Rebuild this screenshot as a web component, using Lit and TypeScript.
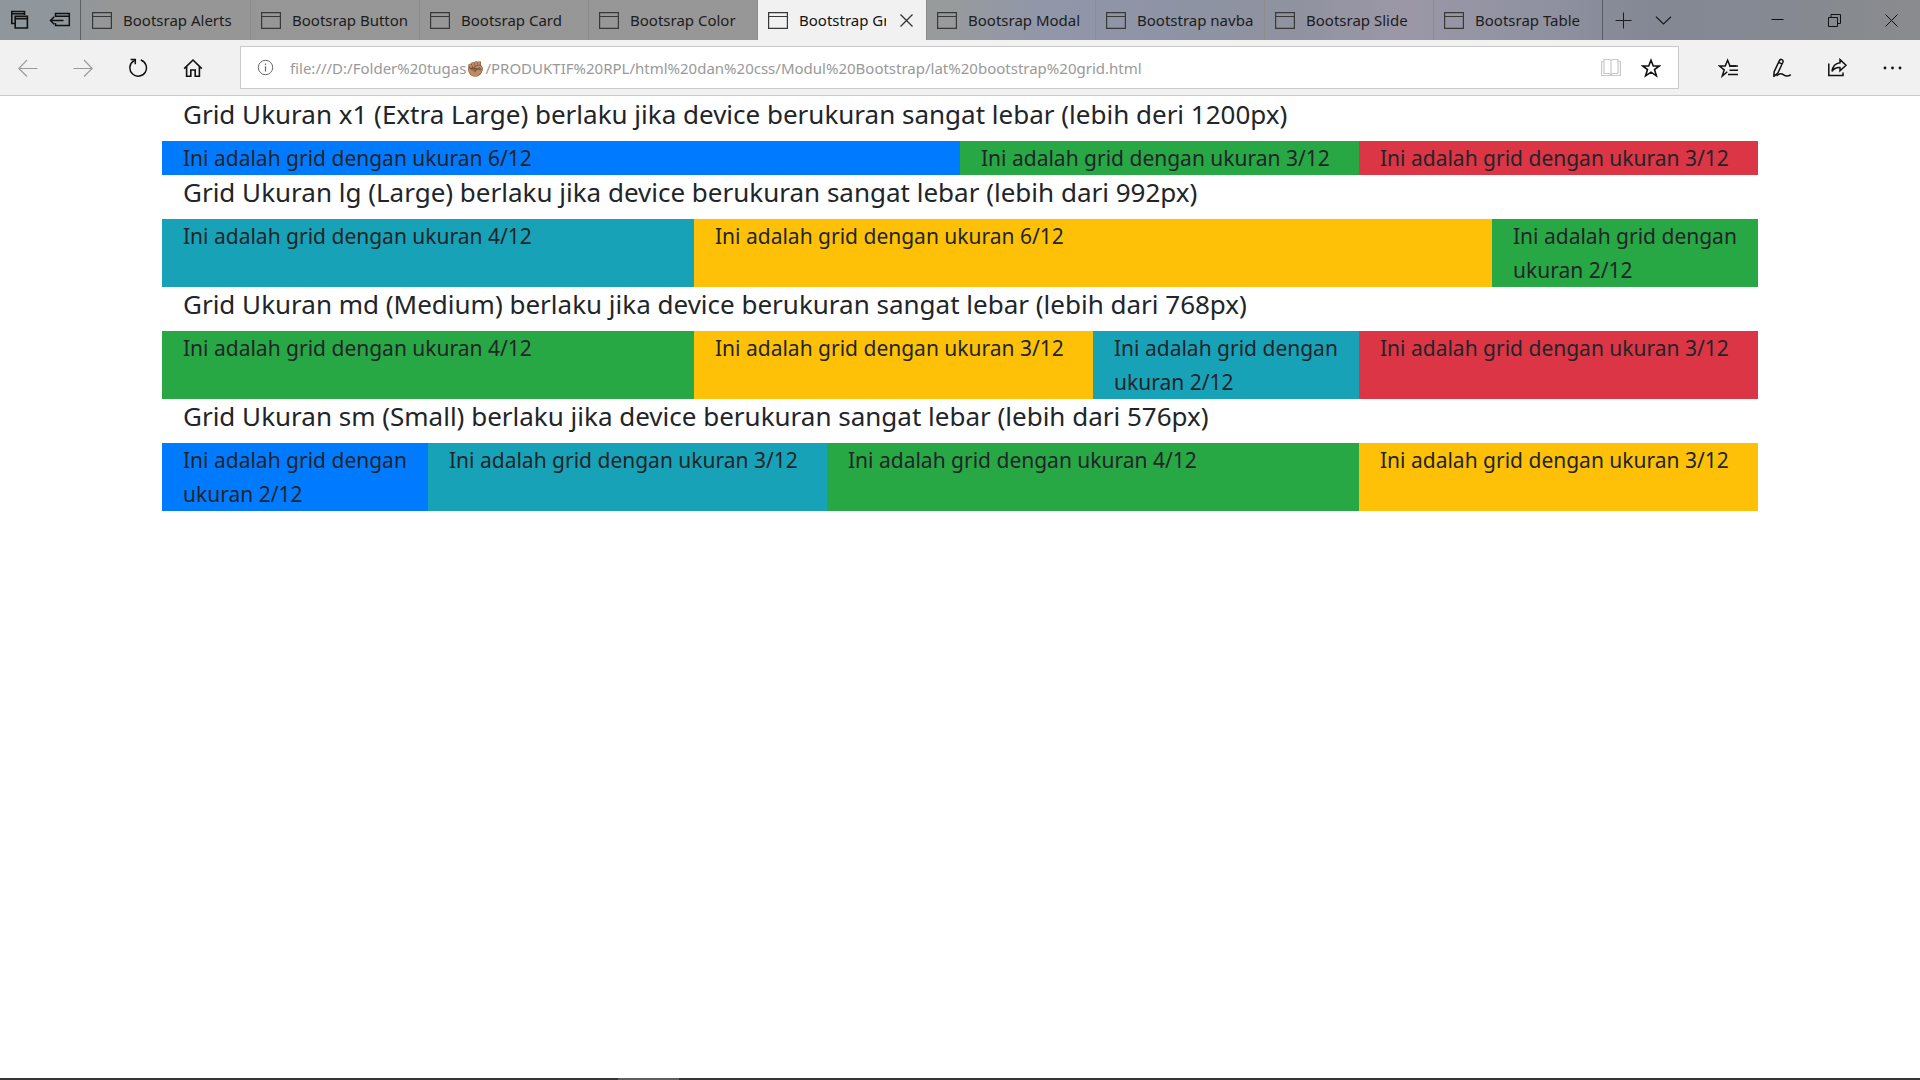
import { LitElement, html, css, svg, nothing } from "lit";
import { customElement, property } from "lit/decorators.js";
import { classMap } from "lit/directives/class-map.js";

const icon = (w: number, h: number, body: unknown) =>
  html`<svg width=${w} height=${h} viewBox="0 0 ${w} ${h}" fill="none" stroke="currentColor" aria-hidden="true">${body}</svg>`;

const icons = {
  stack: () =>
    icon(20, 20, svg`<path stroke-width="1.6" d="M5 13.5H1.8V1.5H14.5V5M1.8 3.8H14.5M5.2 6.2H17.4V18H5.2zM5.2 8.6H17.4"/>`),
  aside: () =>
    icon(22, 20, svg`<path stroke-width="1.5" d="M6.5 7V3.5H20.3V15.5H6.5V13M6.5 6.2H20.3M1.5 10.5H14.5M5.2 6.8L1.5 10.5L5.2 14.2"/>`),
  page: () => icon(20, 17, svg`<path stroke-width="1.2" d="M.6 .6H19.4V16.4H.6zM.6 4.5H19.4"/>`),
  tabClose: () => icon(13, 13, svg`<path stroke-width="1.3" d="M.5 .5L12.5 12.5M12.5 .5L.5 12.5"/>`),
  plus: () => icon(17, 17, svg`<path d="M.5 8.5H16.5M8.5 .5V16.5"/>`),
  chevron: () => icon(17, 9, svg`<path stroke-width="1.2" d="M1 .8L8.5 8L16 .8"/>`),
  minimize: () => icon(13, 13, svg`<path d="M.5 5.5H12.5"/>`),
  restore: () => icon(13, 13, svg`<path d="M.5 3.5H9.5V12.5H.5zM3 3.5V.5H12.5V9.5H9.5"/>`),
  close: () => icon(13, 13, svg`<path d="M.5 .5L12.5 12.5M12.5 .5L.5 12.5"/>`),
  back: () => icon(20, 18, svg`<path stroke-width="1.1" d="M19.5 9.5H1M9 1L.8 9.5L9 17.5"/>`),
  forward: () => icon(20, 18, svg`<path stroke-width="1.1" d="M.5 9.5H19M11 1L19.2 9.5L11 17.5"/>`),
  refresh: () =>
    icon(20, 20, svg`<path stroke-width="1.5" d="M12.8 2A8.3 8.3 0 1 1 5.2 3.2M2.6 1.6H7.3V6.2"/><path stroke-width="1.5" d="M7.2 1.8L4.6 4"/>`),
  home: () =>
    icon(20, 20, svg`<path stroke-width="1.6" d="M1.2 10.6L10 2L18.8 10.6M3.6 8.6V18.2H7.8V12H12.2V18.2H16.4V8.6"/>`),
  info: () =>
    icon(17, 17, svg`<circle cx="8.5" cy="8.5" r="7.2"/><path stroke-width="1.2" d="M8.5 7.2V12.4M8.5 4.6V6"/>`),
  book: () =>
    icon(20, 19, svg`<path stroke-width="1.2" d="M3 1.5H8.5L10 2.5L11.5 1.5H17V15.5H11.5L10 16.5L8.5 15.5H3zM10 2.5V18M3 3.5H.6V17.5H19.4V3.5H17"/>`),
  star: () =>
    icon(20, 20, svg`<path stroke-width="1.6" stroke-linejoin="miter" d="M10 2.2L12.3 8H18.2L13.5 11.6L15.4 17.8L10 14.1L4.6 17.8L6.5 11.6L1.8 8H7.7z"/>`),
  favorites: () =>
    icon(20, 20, svg`<path stroke-width="1.5" d="M18 8H12L9.6 2.2L7.2 8H1.4L6.2 11.8L4.3 18L9.3 13.7"/><path stroke-width="1.4" d="M11 8H20M11.5 12.3H20M10 16.5H20"/>`),
  notes: () =>
    icon(20, 20, svg`<path stroke-width="1.5" stroke-linejoin="round" d="M1.2 13.6L6.4 2.6Q7.2 .9 8.9 1.6Q10.6 2.5 9.9 4.2L4.8 15.2L.8 18.4zM5.6 4.4L9.2 6"/><path stroke-width="1.5" d="M3.5 17.8Q7.5 14.6 9.8 16.4T13.8 18Q16 18 17.8 16.6"/>`),
  share: () =>
    icon(20, 20, svg`<path stroke-width="1.5" d="M.8 5.5V17.5H15V14.5"/><path stroke-width="1.5" stroke-linejoin="miter" d="M12 1.6L18 7.2L12 12.8V9.6Q6.8 9.2 4 13.4Q5 5.6 12 4.8z"/>`),
  more: () =>
    icon(20, 4, svg`<g fill="currentColor" stroke="none"><circle cx="2" cy="2" r="1.4"/><circle cx="9.5" cy="2" r="1.4"/><circle cx="17" cy="2" r="1.4"/></g>`),
};

const buttonReset = css`
  button {
    appearance: none;
    border: 0;
    margin: 0;
    padding: 0;
    background: none;
    color: inherit;
    font: inherit;
    display: flex;
    align-items: center;
    justify-content: center;
  }
  svg {
    display: block;
    flex: none;
  }
`;

const tabs = [
  "Bootsrap Alerts",
  "Bootsrap Button",
  "Bootsrap Card",
  "Bootsrap Color",
  "Bootstrap Grid",
  "Bootsrap Modal",
  "Bootstrap navba",
  "Bootsrap Slide",
  "Bootsrap Table",
];
const activeTab = 4;

@customElement("tab-strip")
class TabStrip extends LitElement {
  static styles = [
    buttonReset,
    css`
      :host {
        display: flex;
        height: 40px;
        color: #1c1c1c;
        background: linear-gradient(
          90deg,
          #8f979d 0%,
          #8f979c 3%,
          #969696 6%,
          #979797 45%,
          #989b9b 49%,
          #9197a8 54%,
          #8e94a6 60%,
          #8f929f 67%,
          #9b97a7 73%,
          #9092a1 80%,
          #838894 86%,
          #858992 92%,
          #898b8d 100%
        );
      }
      .tools {
        display: flex;
        border-right: 1px solid #5d6164;
        margin-right: 1px;
      }
      .tools button {
        width: 40px;
        color: #111;
      }
      .tabs {
        display: flex;
        flex: 0 1 1521px;
        min-width: 0;
      }
      .tab {
        display: flex;
        flex: 1 1 0;
        min-width: 0;
        box-sizing: border-box;
        border-right: 1px solid #8c8c8c;
      }
      .tab:last-child {
        border-right-color: #555a64;
      }
      .tab.active {
        background: #f1f1f1;
        color: #111;
      }
      .title {
        flex: 1;
        min-width: 0;
        gap: 11px;
        padding: 0 8px 0 10px;
        justify-content: flex-start;
      }
      .title svg {
        color: #383838;
      }
      .label {
        overflow: hidden;
        white-space: nowrap;
        line-height: 24px;
      }
      .active .title {
        padding-right: 1px;
      }
      .shut {
        width: 39px;
        color: #333;
      }
      .strip-tools {
        display: flex;
      }
      .strip-tools button {
        width: 40px;
      }
      .window {
        display: flex;
        margin-left: auto;
        color: #111;
      }
      .window button {
        width: 57px;
      }
    `,
  ];
  render() {
    return html`
      <div class="tools">
        <button aria-label="Tabs set aside">${icons.stack()}</button>
        <button aria-label="Set tabs aside">${icons.aside()}</button>
      </div>
      <div class="tabs">
        ${tabs.map(
          (t, i) => html`<div class=${classMap({ tab: true, active: i === activeTab })}>
            <button class="title">${icons.page()}<span class="label">${t}</span></button>
            ${i === activeTab ? html`<button class="shut" aria-label="Close tab">${icons.tabClose()}</button>` : nothing}
          </div>`
        )}
      </div>
      <div class="strip-tools">
        <button aria-label="New tab">${icons.plus()}</button>
        <button aria-label="Tab previews">${icons.chevron()}</button>
      </div>
      <div class="window">
        <button aria-label="Minimize">${icons.minimize()}</button>
        <button aria-label="Restore">${icons.restore()}</button>
        <button aria-label="Close">${icons.close()}</button>
      </div>
    `;
  }
}

@customElement("address-bar")
class AddressBar extends LitElement {
  static styles = [
    buttonReset,
    css`
      :host {
        display: flex;
        align-items: center;
        height: 55px;
        background: #f1f1f1;
        border-bottom: 1px solid #cacaca;
        color: #111;
      }
      .group {
        display: flex;
      }
      .group button {
        width: 55px;
        height: 55px;
      }
      button:disabled {
        color: #999;
      }
      .field {
        flex: 1;
        display: flex;
        align-items: center;
        box-sizing: border-box;
        height: 43px;
        margin: 0 21px 0 20px;
        padding: 0 4px 0 0;
        background: #fff;
        border: 1px solid #cacaca;
      }
      .field button {
        height: 41px;
        width: 46px;
      }
      .field .info {
        width: 49px;
        color: #666;
      }
      .field .reading {
        color: #c8c8c8;
        width: 34px;
      }
      input {
        flex: 1;
        min-width: 0;
        border: 0;
        padding: 0;
        outline: 0;
        background: none;
        color: #999;
        font: 15px/24px "Noto Sans", "Open Sans", sans-serif;
      }
    `,
  ];
  render() {
    return html`
      <div class="group">
        <button aria-label="Back" disabled>${icons.back()}</button>
        <button aria-label="Forward" disabled>${icons.forward()}</button>
        <button aria-label="Refresh">${icons.refresh()}</button>
        <button aria-label="Home">${icons.home()}</button>
      </div>
      <div class="field">
        <button class="info" aria-label="Site information">${icons.info()}</button>
        <input
          type="text"
          aria-label="Address"
          .value=${"file:///D:/Folder%20tugas✊🏽/PRODUKTIF%20RPL/html%20dan%20css/Modul%20Bootstrap/lat%20bootstrap%20grid.html"}
        />
        <button class="reading" aria-label="Reading view" disabled>${icons.book()}</button>
        <button aria-label="Add to favorites">${icons.star()}</button>
      </div>
      <div class="group">
        <button aria-label="Favorites">${icons.favorites()}</button>
        <button aria-label="Add notes">${icons.notes()}</button>
        <button aria-label="Share">${icons.share()}</button>
        <button aria-label="More">${icons.more()}</button>
      </div>
    `;
  }
}

type Cell = { span: number; tone: string };
type Section = { title: string; cells: Cell[] };

const sections: Section[] = [
  {
    title: "Grid Ukuran x1 (Extra Large) berlaku jika device berukuran sangat lebar (lebih deri 1200px)",
    cells: [
      { span: 6, tone: "primary" },
      { span: 3, tone: "success" },
      { span: 3, tone: "danger" },
    ],
  },
  {
    title: "Grid Ukuran lg (Large) berlaku jika device berukuran sangat lebar (lebih dari 992px)",
    cells: [
      { span: 4, tone: "info" },
      { span: 6, tone: "warning" },
      { span: 2, tone: "success" },
    ],
  },
  {
    title: "Grid Ukuran md (Medium) berlaku jika device berukuran sangat lebar (lebih dari 768px)",
    cells: [
      { span: 4, tone: "success" },
      { span: 3, tone: "warning" },
      { span: 2, tone: "info" },
      { span: 3, tone: "danger" },
    ],
  },
  {
    title: "Grid Ukuran sm (Small) berlaku jika device berukuran sangat lebar (lebih dari 576px)",
    cells: [
      { span: 2, tone: "primary" },
      { span: 3, tone: "info" },
      { span: 4, tone: "success" },
      { span: 3, tone: "warning" },
    ],
  },
];

@customElement("grid-section")
class GridSection extends LitElement {
  @property({ attribute: false }) section!: Section;
  static styles = css`
    :host {
      display: block;
      color: #212529;
    }
    .title {
      margin: 0;
      padding: 0 21px 10px;
      font-size: 26px;
      line-height: 34px;
      font-weight: 400;
    }
    .row {
      display: grid;
      grid-template-columns: repeat(12, minmax(0, 1fr));
      font-size: 21px;
      line-height: 34px;
    }
    .cell {
      padding: 0 21px;
    }
    .span-2 { grid-column: span 2; }
    .span-3 { grid-column: span 3; }
    .span-4 { grid-column: span 4; }
    .span-6 { grid-column: span 6; }
    .primary { background: #007bff; }
    .success { background: #28a745; }
    .danger { background: #dc3545; }
    .info { background: #17a2b8; }
    .warning { background: #ffc107; }
  `;
  render() {
    return html`
      <h5 class="title">${this.section.title}</h5>
      <div class="row">
        ${this.section.cells.map(
          (c) => html`<div class="cell span-${c.span} ${c.tone}">Ini adalah grid dengan ukuran ${c.span}/12</div>`
        )}
      </div>
    `;
  }
}

@customElement("app-root")
class AppRoot extends LitElement {
  static styles = css`
    :host {
      display: flex;
      flex-direction: column;
      min-height: 100vh;
      background: #fff;
      font: 15px/24px "Noto Sans", "Open Sans", sans-serif;
    }
    main {
      flex: 1;
      box-sizing: border-box;
      width: 100%;
      max-width: 1596px;
      margin: 0 auto;
      padding-top: 1px;
    }
    footer {
      display: flex;
      height: 2px;
      background: #353535;
      padding-left: 618px;
    }
    .running {
      width: 61px;
      background: #5e5e5e;
    }
  `;
  render() {
    return html`
      <tab-strip></tab-strip>
      <address-bar></address-bar>
      <main>${sections.map((s) => html`<grid-section .section=${s}></grid-section>`)}</main>
      <footer><div class="running"></div></footer>
    `;
  }
}
